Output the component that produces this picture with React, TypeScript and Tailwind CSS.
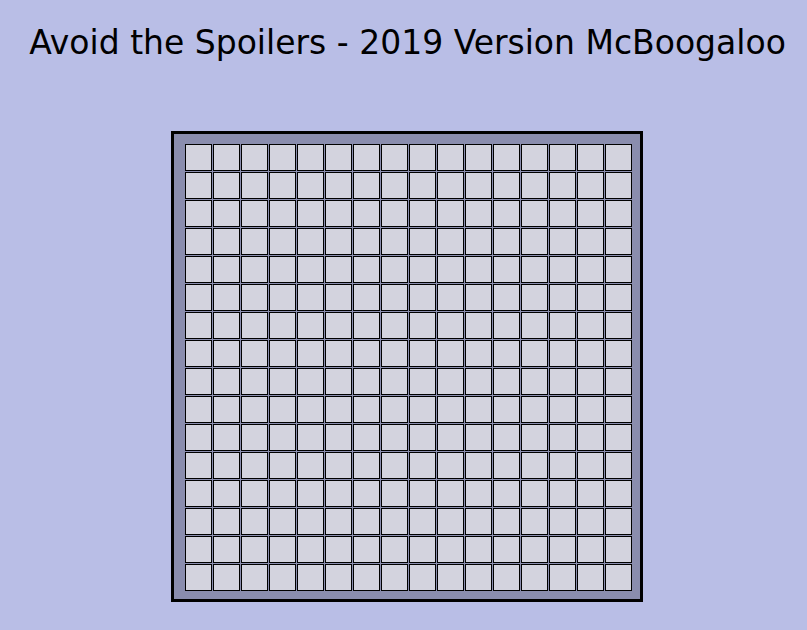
export default function App() {
  const cells = Array.from({ length: 256 }, (_, i) => i);

  return (
    <div className="min-h-[630px] w-full bg-[#b9bee6] pt-[22px]">
      <h1 className="pl-[8px] text-center font-['DejaVu_Sans',sans-serif] text-[33px] leading-[42px] font-normal text-black">
        Avoid the Spoilers - 2019 Version McBoogaloo
      </h1>
      <div className="mt-[67px] flex justify-center pl-[7px]">
        <div className="border-[3px] border-black bg-[#8a8dae] pt-[10px] pr-[8px] pb-[8px] pl-[11px]">
          <div className="grid grid-cols-16 gap-px">
            {cells.map((i) => (
              <div
                key={i}
                className="h-[27px] w-[27px] border border-black bg-[#d3d3de]"
              />
            ))}
          </div>
        </div>
      </div>
    </div>
  );
}
